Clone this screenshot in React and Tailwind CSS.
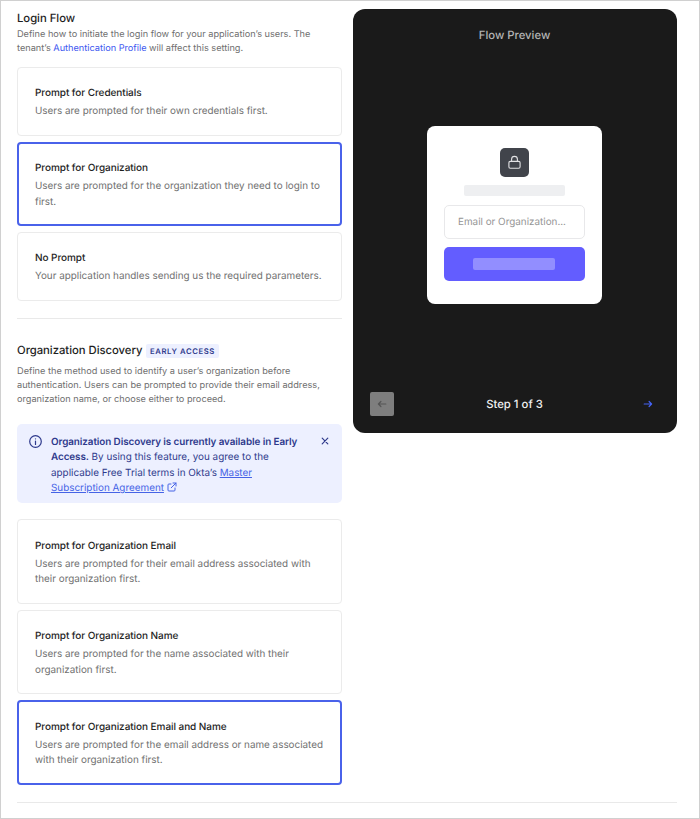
import React from 'react';

function OptionCard({ title, lines, selected }) {
  return (
    <div
      className={
        'rounded-[4px] bg-white ' +
        (selected ? 'border-2 border-[#4a62ea] px-[16px]' : 'border border-[#ebebeb] px-[17px]') +
        ' ' +
        (lines.length > 1 ? 'h-[84.7px]' : 'h-[69.2px]') +
        (selected ? ' pt-[16.4px]' : ' pt-[17.2px]')
      }
    >
      <div className="text-[10px] leading-[16px] font-medium tracking-[-0.06px] whitespace-nowrap text-[#1e1e1e]">{title}</div>
      <div className="mt-[3px] text-[9.9px] leading-[15.6px] whitespace-nowrap text-[#6f6f6f]">
        {lines.map((line) => (
          <div key={line}>{line}</div>
        ))}
      </div>
    </div>
  );
}

function Arrow({ className, flip }) {
  return (
    <svg className={className} viewBox="0 0 10 10" fill="none" stroke="currentColor" strokeWidth="1.2" strokeLinecap="round" strokeLinejoin="round">
      <path d={flip ? 'M8.8 5H1.4M3.9 2.5L1.4 5L3.9 7.5' : 'M1.2 5H8.6M6.1 2.5L8.6 5L6.1 7.5'} />
    </svg>
  );
}

function FlowPreview() {
  return (
    <section className="flex h-[424px] w-[324px] flex-col items-center rounded-[12px] bg-[#1a1a1a]">
      <h2 className="mt-[17px] mr-px text-[11.3px] leading-[18px] font-medium text-[#b4b4b4]">Flow Preview</h2>
      <div className="mt-[81.5px] mr-px flex h-[178.5px] w-[175px] flex-col items-center rounded-[8px] bg-white">
        <div className="mt-[22.5px] flex h-[29px] w-[29px] items-center justify-center rounded-[5px] bg-[#41444b]">
          <svg className="h-[15px] w-[15px]" viewBox="0 0 15 15" fill="none" stroke="#e2e2e4" strokeWidth="1.1">
            <rect x="1.9" y="6.4" width="11.2" height="6.8" rx="1.4" />
            <path d="M4.6 6.4V4.3a2.9 2.9 0 0 1 5.8 0V6.4" />
          </svg>
        </div>
        <div className="mt-[8px] h-[11px] w-[101px] rounded-[2px] bg-[#eeeff1]" />
        <div className="mt-[9px] flex h-[34px] w-[141px] items-center rounded-[5px] border border-[#e8e8ea] pt-px pl-[13px] text-[9.9px] whitespace-nowrap text-[#959595]">
          Email or Organization...
        </div>
        <div className="mt-[8px] flex h-[34px] w-[141px] items-center justify-center rounded-[5px] bg-[#635dff]">
          <div className="mr-px h-[12px] w-[82px] rounded-[2px] bg-[#928eff]" />
        </div>
      </div>
      <div className="mt-[88px] flex w-full items-center justify-between px-[17px]">
        <div className="flex h-[24px] w-[24px] items-center justify-center rounded-[2px] bg-[#7e7e7e] text-[#555555]">
          <Arrow flip className="h-[10px] w-[10px]" />
        </div>
        <div className="mr-px text-[11.3px] leading-[17px] font-medium text-[#f0f0f0]">Step 1 of 3</div>
        <div className="flex h-[24px] w-[24px] items-center justify-center text-[#4563f5]">
          <Arrow className="h-[10px] w-[10px]" />
        </div>
      </div>
    </section>
  );
}

function EarlyAccessNotice() {
  return (
    <div className="mt-[16.8px] flex h-[79px] w-[324.5px] rounded-[5px] bg-[#edf0ff] pt-[10.7px] pl-[12px] text-[#2f3a8c]">
      <svg className="mt-[0.3px] h-[13px] w-[13px] shrink-0" viewBox="0 0 13 13" fill="none" stroke="currentColor" strokeWidth="1.2">
        <circle cx="6.5" cy="6.5" r="5.8" />
        <path d="M6.5 6V9.4" strokeLinecap="round" />
        <circle cx="6.5" cy="3.9" r="0.35" fill="currentColor" strokeWidth="0.5" />
      </svg>
      <div className="ml-[9px] w-[264px] text-[9.9px] leading-[15.55px] whitespace-nowrap">
        <div className="font-semibold tracking-[-0.08px]">Organization Discovery is currently available in Early</div>
        <div><span className="font-semibold tracking-[-0.08px]">Access.</span> By using this feature, you agree to the</div>
        <div>applicable Free Trial terms in Okta’s <a className="text-[#4563e6] underline">Master</a></div>
        <div className="flex text-[#4563e6]">
          <a className="underline">Subscription Agreement</a>
          <svg className="mt-[0.5px] ml-[3px] h-[10px] w-[10px]" viewBox="0 0 10 10" fill="none" stroke="currentColor" strokeWidth="1" strokeLinecap="round" strokeLinejoin="round">
            <path d="M4 2H1.9a.9.9 0 0 0-.9.9v5.2a.9.9 0 0 0 .9.9h5.2a.9.9 0 0 0 .9-.9V6M6 1h3v3M9 1L4.2 5.8" />
          </svg>
        </div>
      </div>
      <svg className="mt-[2.5px] ml-[6px] h-[8px] w-[8px] shrink-0" viewBox="0 0 8 8" fill="none" stroke="currentColor" strokeWidth="1.2" strokeLinecap="round">
        <path d="M1.2 1.2L6.8 6.8M6.8 1.2L1.2 6.8" />
      </svg>
    </div>
  );
}

export default function App() {
  return (
    <main className="h-[819px] w-[700px] overflow-hidden border border-[#d0d0d0] bg-white pt-[8px] pl-[16px] font-['Inter','Liberation_Sans',sans-serif] [text-rendering:geometricPrecision]">
      <div className="flex h-[794px] w-[660px] justify-between border-b border-[#e9e9e9]">
        <div className="w-[324.5px]">
          <h1 className="text-[11.3px] leading-[18px] font-medium tracking-[-0.03px] text-[#1e1e1e]">Login Flow</h1>
          <div className="pt-px text-[9.2px] leading-[14.1px] tracking-[-0.01px] whitespace-nowrap text-[#6f6f6f]">
            <div>Define how to initiate the login flow for your application’s users. The</div>
            <div>tenant’s <a className="text-[#4058f0]">Authentication Profile</a> will affect this setting.</div>
          </div>
          <div className="mt-[10.6px] flex flex-col gap-[5.7px]">
            <OptionCard title="Prompt for Credentials" lines={['Users are prompted for their own credentials first.']} />
            <OptionCard selected title="Prompt for Organization" lines={['Users are prompted for the organization they need to login to', 'first.']} />
            <OptionCard title="No Prompt" lines={['Your application handles sending us the required parameters.']} />
          </div>
          <div className="mt-[16.6px] h-px bg-[#e9e9e9]" />
          <div className="mt-[23px] flex items-center gap-[3.5px]">
            <h1 className="text-[11.3px] leading-[17px] font-medium tracking-[-0.03px] whitespace-nowrap text-[#1e1e1e]">Organization Discovery</h1>
            <span className="mt-[2px] flex h-[14px] w-[73px] items-center justify-center rounded-[2px] bg-[#edf0ff] text-[7.7px] font-semibold tracking-[0.6px] whitespace-nowrap text-[#2f3a8c]">EARLY ACCESS</span>
          </div>
          <div className="mt-[6px] text-[9.2px] leading-[14.1px] whitespace-nowrap text-[#6f6f6f]">
            <div>Define the method used to identify a user’s organization before</div>
            <div>authentication. Users can be prompted to provide their email address,</div>
            <div>organization name, or choose either to proceed.</div>
          </div>
          <EarlyAccessNotice />
          <div className="mt-[16.5px] flex flex-col gap-[5.7px]">
            <OptionCard title="Prompt for Organization Email" lines={['Users are prompted for their email address associated with', 'their organization first.']} />
            <OptionCard title="Prompt for Organization Name" lines={['Users are prompted for the name associated with their', 'organization first.']} />
            <OptionCard selected title="Prompt for Organization Email and Name" lines={['Users are prompted for the email address or name associated', 'with their organization first.']} />
          </div>
        </div>
        <FlowPreview />
      </div>
    </main>
  );
}
